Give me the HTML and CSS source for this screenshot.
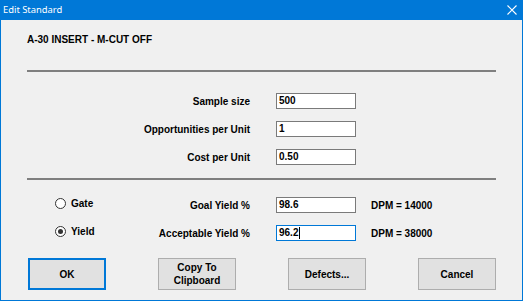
FILE: index.html
```html
<!DOCTYPE html>
<html lang="en">
  <head>
    <meta charset="UTF-8" />
    <title>Edit Standard</title>
    <link rel="stylesheet" href="styles.css">
  </head>

  <body>
    <div class="dialog">
      <div class="dialog_title">
        <span class="dialog_title_text">Edit Standard</span>
        <svg class="dialog_close" width="10" height="10" viewBox="0 0 10 10">
          <path d="M0.5 0.5 L9.5 9.5 M9.5 0.5 L0.5 9.5" stroke="#fff" stroke-width="1.1" fill="none" />
        </svg>
      </div>
      <div class="dialog_body">
        <div class="part_name">A-30 INSERT - M-CUT OFF</div>
        <div class="sep sep_top"></div>

        <div class="form_grid">
          <div class="cell_lead"><span class="cell_label">Sample size</span></div>
          <div class="field">500</div>
          <div class="cell_note"></div>

          <div class="cell_lead"><span class="cell_label">Opportunities per Unit</span></div>
          <div class="field">1</div>
          <div class="cell_note"></div>

          <div class="cell_lead"><span class="cell_label">Cost per Unit</span></div>
          <div class="field">0.50</div>
          <div class="cell_note"></div>
        </div>

        <div class="sep sep_mid"></div>

        <div class="form_grid">
          <div class="cell_lead">
            <label class="option"><span class="radio"></span>Gate</label>
            <span class="cell_label">Goal Yield %</span>
          </div>
          <div class="field">98.6</div>
          <div class="cell_note">DPM = 14000</div>

          <div class="cell_lead">
            <label class="option"><span class="radio checked"></span>Yield</label>
            <span class="cell_label">Acceptable Yield %</span>
          </div>
          <div class="field focused">96.2<span class="caret"></span></div>
          <div class="cell_note">DPM = 38000</div>
        </div>

        <div class="button_row">
          <div class="btn btn_default">OK</div>
          <div class="btn">Copy To<br />Clipboard</div>
          <div class="btn">Defects...</div>
          <div class="btn">Cancel</div>
        </div>
      </div>
    </div>
  </body>
</html>
```

FILE: styles.css
```css
html,
body {
  margin: 0;
  padding: 0;
  background-color: #f0f0f0;
}

.dialog {
  width: 523px;
  height: 301px;
  box-sizing: border-box;
  border: 1px solid #0078d7;
  border-top: none;
  background-color: #f0f0f0;
  font-family: "Liberation Sans", Arial, sans-serif;
  font-size: 10px;
  font-weight: bold;
  color: #000;
}

.dialog_title {
  height: 20px;
  background-color: #0078d7;
  color: #fff;
  display: flex;
  align-items: center;
  justify-content: space-between;
  padding: 0 6px 0 3px;
  margin: 0 -1px;
}

.dialog_title_text {
  font-family: "Noto Sans", "Open Sans", sans-serif;
  font-size: 9.4px;
  font-weight: normal;
  line-height: 20px;
}

.dialog_close {
  margin-top: -1px;
}

.dialog_body {
  padding: 13px 26px 0 26px;
}

.part_name {
  line-height: 14px;
}

.sep {
  height: 2px;
  background-color: #7f7f7f;
}

.sep_top {
  margin-top: 23px;
  margin-bottom: 21px;
}

.sep_mid {
  margin-top: 13px;
  margin-bottom: 17px;
}

.form_grid {
  display: grid;
  grid-template-columns: 249px 80px auto;
  grid-auto-rows: 16px;
  row-gap: 12px;
  align-items: center;
}

.cell_lead {
  display: flex;
  align-items: center;
  justify-content: flex-end;
  padding: 0 26px 0 28px;
  height: 16px;
}

.cell_label {
  margin-left: auto;
}

.cell_note {
  padding-left: 15px;
}

.option {
  display: flex;
  align-items: center;
  margin-top: -3px;
}

.field {
  height: 16px;
  box-sizing: border-box;
  border: 1px solid #7a7a7a;
  background-color: #fff;
  padding-left: 2px;
  line-height: 14px;
  display: flex;
  align-items: center;
}

.field.focused {
  border-color: #0078d7;
}

.caret {
  display: inline-block;
  width: 1px;
  height: 12px;
  margin-left: 1px;
  background-color: #000;
}

.radio {
  flex-shrink: 0;
  width: 11px;
  height: 11px;
  box-sizing: border-box;
  border: 1px solid #333;
  border-radius: 50%;
  background-color: #fff;
  margin-right: 5px;
  display: flex;
  align-items: center;
  justify-content: center;
}

.radio.checked::after {
  content: "";
  width: 5px;
  height: 5px;
  border-radius: 50%;
  background-color: #333;
}

.button_row {
  display: flex;
  justify-content: space-between;
  margin-top: 17px;
  margin-left: 1px;
}

.btn {
  width: 78px;
  height: 32px;
  box-sizing: border-box;
  border: 1px solid #adadad;
  background-color: #e1e1e1;
  display: flex;
  align-items: center;
  justify-content: center;
  text-align: center;
  line-height: 13px;
}

.btn_default {
  border: 2px solid #0078d7;
}
```
